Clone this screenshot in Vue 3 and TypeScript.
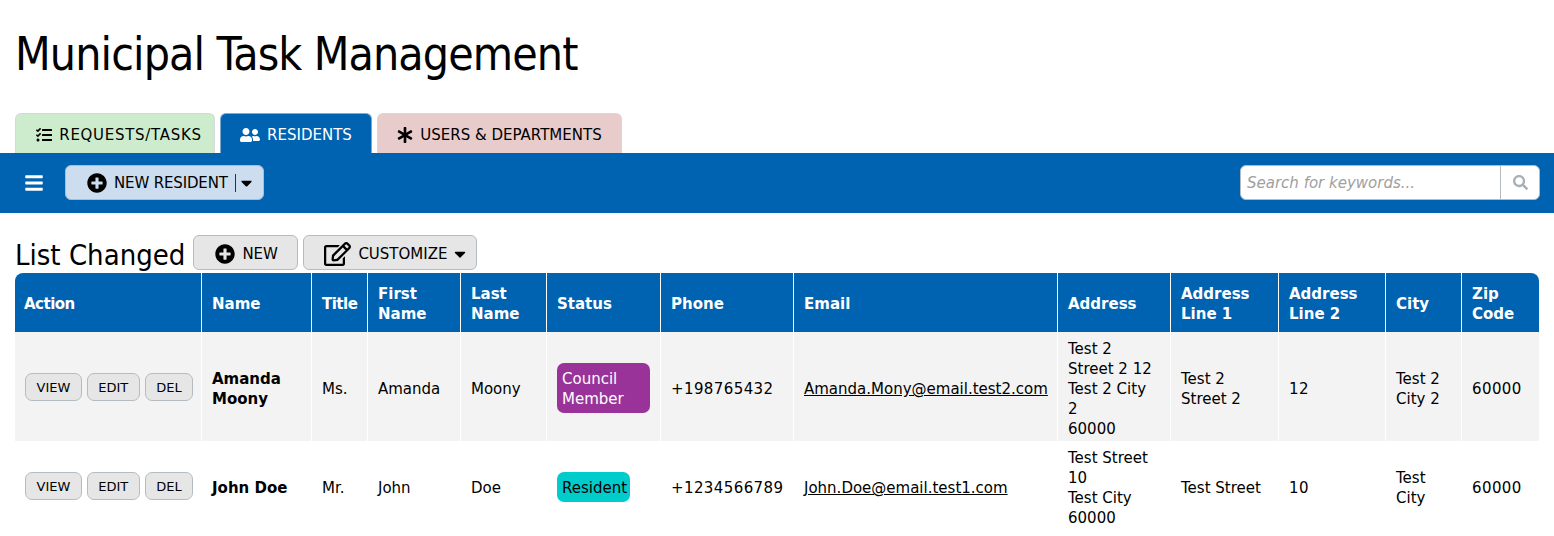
<script setup lang="ts">
interface Resident {
  name: string
  title: string
  first: string
  last: string
  status: string
  statusClass: string
  phone: string
  email: string
  address: string[]
  line1: string
  line2: string
  city: string
  zip: string
}

const columns = [
  'Action', 'Name', 'Title', 'First Name', 'Last Name', 'Status', 'Phone', 'Email',
  'Address', 'Address Line 1', 'Address Line 2', 'City', 'Zip Code',
]

const residents: Resident[] = [
  {
    name: 'Amanda Moony', title: 'Ms.', first: 'Amanda', last: 'Moony',
    status: 'Council Member', statusClass: 'council', phone: '+198765432',
    email: 'Amanda.Mony@email.test2.com',
    address: ['Test 2', 'Street 2 12', 'Test 2 City', '2', '60000'],
    line1: 'Test 2 Street 2', line2: '12', city: 'Test 2 City 2', zip: '60000',
  },
  {
    name: 'John Doe', title: 'Mr.', first: 'John', last: 'Doe',
    status: 'Resident', statusClass: 'resident', phone: '+1234566789',
    email: 'John.Doe@email.test1.com',
    address: ['Test Street', '10', 'Test City', '60000'],
    line1: 'Test Street', line2: '10', city: 'Test City', zip: '60000',
  },
]

const plusPath = 'M256 8C119 8 8 119 8 256s111 248 248 248 248-111 248-248S393 8 256 8zm144 276c0 6.6-5.4 12-12 12h-92v92c0 6.6-5.4 12-12 12h-56c-6.6 0-12-5.4-12-12v-92h-92c-6.6 0-12-5.4-12-12v-56c0-6.6 5.4-12 12-12h92v-92c0-6.6 5.4-12 12-12h56c6.6 0 12 5.4 12 12v92h92c6.6 0 12 5.4 12 12v56z'
const caretPath = 'M31.3 192h257.3c17.8 0 26.7 21.5 14.1 34.1L174.1 354.8c-7.8 7.8-20.5 7.8-28.3 0L17.2 226.1C4.6 213.5 13.5 192 31.3 192z'
</script>

<template>
  <div class="page">
    <h1>Municipal Task Management</h1>

    <div class="tabs">
      <a class="tab green">
        <svg class="tab-icon" width="16" height="16" viewBox="0 0 512 512"><path d="M139.61 35.5a12 12 0 0 0-17 0L58.93 98.81l-22.7-22.12a12 12 0 0 0-17 0L3.53 92.41a12 12 0 0 0 0 17l47.59 47.4a12.78 12.78 0 0 0 17.61 0l15.59-15.62L156.52 69a12.09 12.09 0 0 0 .09-17zm0 159.19a12 12 0 0 0-17 0l-63.68 63.72-22.7-22.1a12 12 0 0 0-17 0L3.53 252a12 12 0 0 0 0 17L51 316.5a12.77 12.77 0 0 0 17.6 0l15.7-15.69 72.2-72.22a12 12 0 0 0 .09-16.9zM64 368c-26.49 0-48.59 21.5-48.59 48S37.53 464 64 464a48 48 0 0 0 0-96zm432 16H208a16 16 0 0 0-16 16v32a16 16 0 0 0 16 16h288a16 16 0 0 0 16-16v-32a16 16 0 0 0-16-16zm0-320H208a16 16 0 0 0-16 16v32a16 16 0 0 0 16 16h288a16 16 0 0 0 16-16V80a16 16 0 0 0-16-16zm0 160H208a16 16 0 0 0-16 16v32a16 16 0 0 0 16 16h288a16 16 0 0 0 16-16v-32a16 16 0 0 0-16-16z" /></svg>
        REQUESTS/TASKS
      </a>
      <a class="tab active">
        <svg class="tab-icon" width="20" height="16" viewBox="0 0 640 512"><path d="M192 256c61.9 0 112-50.1 112-112S253.9 32 192 32 80 82.1 80 144s50.1 112 112 112zm76.8 32h-8.3c-20.8 10-43.9 16-68.5 16s-47.6-6-68.5-16h-8.3C51.6 288 0 339.6 0 403.2V432c0 26.5 21.5 48 48 48h288c26.5 0 48-21.5 48-48v-28.8c0-63.6-51.6-115.2-115.2-115.2zM480 256c53 0 96-43 96-96s-43-96-96-96-96 43-96 96 43 96 96 96zm48 32h-3.8c-13.9 4.8-28.6 8-44.2 8s-30.3-3.2-44.2-8H432c-20.4 0-39.2 5.9-55.7 15.4 24.4 26.3 39.7 61.2 39.7 99.8v38.4c0 2.2-.5 4.3-.6 6.4H592c26.5 0 48-21.5 48-48 0-61.9-50.1-112-112-112z" /></svg>
        RESIDENTS
      </a>
      <a class="tab red">
        <svg class="tab-icon" width="16" height="16" viewBox="0 0 512 512"><path d="M478.21 334.093L336 256l142.21-78.093c11.795-6.477 15.961-21.384 9.232-33.037l-19.48-33.741c-6.728-11.653-21.72-15.499-33.227-8.523L296 186.718l3.475-162.204C299.763 11.061 288.937 0 275.48 0h-38.96c-13.456 0-24.283 11.061-23.994 24.514L216 186.718 77.265 102.607c-11.506-6.976-26.499-3.13-33.227 8.523l-19.48 33.741c-6.728 11.653-2.562 26.56 9.233 33.037L176 256 33.79 334.093c-11.795 6.477-15.961 21.384-9.232 33.037l19.48 33.741c6.728 11.653 21.721 15.499 33.227 8.523L216 325.282l-3.475 162.204C212.237 500.939 223.064 512 236.52 512h38.961c13.456 0 24.283-11.061 23.995-24.514L296 325.282l138.735 84.111c11.506 6.976 26.499 3.13 33.227-8.523l19.48-33.741c6.728-11.653 2.563-26.559-9.232-33.036z" /></svg>
        USERS &amp; DEPARTMENTS
      </a>
    </div>

    <div class="toolbar">
      <svg class="menu" width="18" height="20" viewBox="0 0 448 512"><path fill="#fff" d="M16 132h416c8.837 0 16-7.163 16-16V76c0-8.837-7.163-16-16-16H16C7.163 60 0 67.163 0 76v40c0 8.837 7.163 16 16 16zm0 160h416c8.837 0 16-7.163 16-16v-40c0-8.837-7.163-16-16-16H16c-8.837 0-16 7.163-16 16v40c0 8.837 7.163 16 16 16zm0 160h416c8.837 0 16-7.163 16-16v-40c0-8.837-7.163-16-16-16H16c-8.837 0-16 7.163-16 16v40c0 8.837 7.163 16 16 16z" /></svg>
      <button class="btn new-resident">
        <svg width="20" height="20" viewBox="0 0 512 512"><path :d="plusPath" /></svg>
        <span class="label">NEW RESIDENT</span>
        <span class="split"></span>
        <svg width="11" height="18" viewBox="0 0 320 512"><path :d="caretPath" /></svg>
      </button>
      <div class="search">
        <input type="text" placeholder="Search for keywords..." />
        <span class="search-btn">
          <svg width="15" height="15" viewBox="0 0 512 512"><path fill="#a9b0b4" d="M505 442.7L405.3 343c-4.5-4.5-10.6-7-17-7H372c27.6-35.3 44-79.7 44-128C416 93.1 322.9 0 208 0S0 93.1 0 208s93.1 208 208 208c48.3 0 92.7-16.4 128-44v16.3c0 6.4 2.5 12.5 7 17l99.7 99.7c9.4 9.4 24.6 9.4 33.9 0l28.3-28.3c9.4-9.4 9.4-24.6.1-34zM208 336c-70.7 0-128-57.2-128-128 0-70.7 57.2-128 128-128 70.7 0 128 57.2 128 128 0 70.7-57.2 128-128 128z" /></svg>
        </span>
      </div>
    </div>

    <div class="list-head">
      <h2>List Changed</h2>
      <button class="btn grey new">
        <svg width="20" height="20" viewBox="0 0 512 512"><path :d="plusPath" /></svg>
        <span class="label">NEW</span>
      </button>
      <button class="btn grey customize">
        <svg width="27" height="24" viewBox="0 0 576 512"><path d="M402.3 344.9l32-32c5-5 13.7-1.5 13.7 5.7V464c0 26.5-21.5 48-48 48H48c-26.5 0-48-21.5-48-48V112c0-26.5 21.5-48 48-48h273.5c7.1 0 10.7 8.6 5.7 13.7l-32 32c-1.5 1.5-3.5 2.3-5.7 2.3H48v352h352V350.5c0-2.1.8-4.1 2.3-5.6zm156.6-201.8L296.3 405.7l-90.4 10c-26.2 2.9-48.5-19.2-45.6-45.6l10-90.4L432.9 17.1c22.9-22.9 59.9-22.9 82.7 0l43.2 43.2c22.9 22.9 22.9 60 .1 82.8zM460.1 174L402 115.9 216.2 301.8l-7.3 65.3 65.3-7.3L460.1 174zm64.8-79.7l-43.2-43.2c-4.1-4.1-10.8-4.1-14.8 0L436 82l58.1 58.1 30.9-30.9c4-4.2 4-10.8-.1-14.9z" /></svg>
        <span class="label">CUSTOMIZE</span>
        <svg width="12" height="18" viewBox="0 0 320 512"><path :d="caretPath" /></svg>
      </button>
    </div>

    <table>
      <thead>
        <tr>
          <th v-for="c in columns" :key="c">{{ c }}</th>
        </tr>
      </thead>
      <tbody>
        <tr v-for="r in residents" :key="r.email">
          <td class="actions">
            <button class="mini">VIEW</button>
            <button class="mini">EDIT</button>
            <button class="mini">DEL</button>
          </td>
          <td class="strong">{{ r.name }}</td>
          <td>{{ r.title }}</td>
          <td>{{ r.first }}</td>
          <td>{{ r.last }}</td>
          <td><span class="status" :class="r.statusClass">{{ r.status }}</span></td>
          <td class="num">{{ r.phone }}</td>
          <td><a class="mail">{{ r.email }}</a></td>
          <td><div v-for="a in r.address" :key="a">{{ a }}</div></td>
          <td>{{ r.line1 }}</td>
          <td class="num">{{ r.line2 }}</td>
          <td>{{ r.city }}</td>
          <td class="num">{{ r.zip }}</td>
        </tr>
      </tbody>
    </table>
  </div>
</template>

<style>
html, body {
  margin: 0;
  background: #fff;
  overflow: hidden;
}
</style>

<style scoped>
.page {
  font-family: "DejaVu Sans", Verdana, sans-serif;
  color: #000;
  height: 536px;
  overflow: hidden;
}

h1 {
  margin: 0;
  padding: 26px 15px 0;
  height: 113px;
  box-sizing: border-box;
  font-family: "DejaVu Sans Condensed", "DejaVu Sans", sans-serif;
  font-stretch: condensed;
  font-weight: 400;
  font-size: 46px;
  line-height: 56px;
  letter-spacing: -0.88px;
  white-space: nowrap;
}

.tabs {
  display: flex;
  padding-left: 15px;
  height: 40px;
}

.tab {
  display: flex;
  align-items: center;
  justify-content: center;
  gap: 7px;
  box-sizing: border-box;
  height: 40px;
  padding-top: 2px;
  border: 1px solid #d8d8d8;
  border-bottom: none;
  border-radius: 6px 6px 0 0;
  font-size: 15px;
}

.tab-icon {
  flex: none;
}

.green {
  width: 200px;
  margin-right: 5px;
  padding-left: 8px;
  background: #cdebcd;
  letter-spacing: 0.7px;
}

.active {
  width: 152px;
  margin-right: 5px;
  background: #0063b1;
  border-color: #7fa9cf;
  color: #fff;
}

.active path {
  fill: #fff;
}

.red {
  width: 245px;
  background: #e8cccc;
}

.toolbar {
  display: flex;
  align-items: center;
  box-sizing: border-box;
  height: 60px;
  padding: 0 14px 2px 25px;
  background: #0063b1;
}

.menu {
  margin: 2px 22px 0 0;
}

.btn {
  display: flex;
  align-items: center;
  box-sizing: border-box;
  height: 35px;
  padding-top: 3px;
  border: 1px solid #b4bcc2;
  border-radius: 6px;
  font-family: "DejaVu Sans", Verdana, sans-serif;
  font-size: 15px;
  color: #000;
  cursor: pointer;
}

.new-resident {
  width: 199px;
  padding-left: 21px;
  padding-right: 0;
  background: #cbddee;
}

.new-resident .label {
  letter-spacing: -0.15px;
}

.label {
  margin-left: 7px;
}

.split {
  width: 1px;
  height: 18px;
  margin: 0 5px 0 7px;
  background: #333;
}

.search {
  display: flex;
  box-sizing: border-box;
  width: 300px;
  height: 35px;
  margin-left: auto;
  background: #fff;
  border: 1px solid #b4bcc2;
  border-radius: 6px;
  overflow: hidden;
}

.search input {
  flex: 1;
  min-width: 0;
  border: none;
  outline: none;
  padding: 2px 6px 0;
  background: transparent;
  font-family: "DejaVu Sans", Verdana, sans-serif;
  font-size: 15px;
  font-style: italic;
}

.search input::placeholder {
  color: #a0a0a0;
  opacity: 1;
}

.search-btn {
  display: flex;
  align-items: center;
  justify-content: center;
  width: 38px;
  border-left: 1px solid #b4bcc2;
}

.list-head {
  display: flex;
  align-items: center;
  gap: 5px;
  height: 60px;
  padding: 22px 0 3px 15px;
  box-sizing: border-box;
}

h2 {
  margin: 0 3px 0 0;
  font-family: "DejaVu Sans Condensed", "DejaVu Sans", sans-serif;
  font-stretch: condensed;
  font-weight: 400;
  font-size: 29px;
  line-height: 38px;
  white-space: nowrap;
  position: relative;
  top: 2px;
}

.grey {
  background: #e6e6e6;
}

.new {
  width: 105px;
  padding-left: 21px;
}

.customize {
  width: 174px;
  padding-left: 20px;
}

.customize .label {
  margin: 0 7px 0 7px;
}

table {
  width: 1524px;
  margin-left: 15px;
  border-collapse: separate;
  border-spacing: 0;
  table-layout: fixed;
  font-size: 15px;
  line-height: 20px;
}

th {
  height: 59px;
  padding: 2px 8px 0 10px;
  box-sizing: border-box;
  background: #0063b1;
  color: #fff;
  text-align: left;
  font-weight: 700;
  border-left: 1px solid #fff;
  font-size: 15px;
}

th:first-child {
  border-left: none;
  border-top-left-radius: 8px;
  padding-left: 9px;
}

th:last-child {
  border-top-right-radius: 8px;
}

th:nth-child(1),
th:nth-child(3) {
  letter-spacing: -0.5px;
}

th:nth-child(1) { width: 186px; }
th:nth-child(2) { width: 110px; }
th:nth-child(3) { width: 56px; }
th:nth-child(4) { width: 93px; }
th:nth-child(5) { width: 86px; }
th:nth-child(6) { width: 114px; }
th:nth-child(7) { width: 133px; }
th:nth-child(8) { width: 264px; }
th:nth-child(9) { width: 113px; }
th:nth-child(10) { width: 108px; }
th:nth-child(11) { width: 107px; }
th:nth-child(12) { width: 76px; }
th:nth-child(13) { width: 78px; }

td {
  padding: 7px 10px 2px;
  box-sizing: border-box;
  border-left: 1px solid #fff;
  vertical-align: middle;
}

td:first-child {
  border-left: none;
}

tbody tr:nth-child(odd) td {
  background: #f3f3f3;
}

.actions {
  padding: 0 0 0 10px;
  white-space: nowrap;
}

.mini {
  box-sizing: border-box;
  height: 28px;
  padding: 2px 10.5px 0;
  margin-right: 5px;
  border: 1px solid #b4bcc2;
  border-radius: 7px;
  background: #e6e6e6;
  font-family: "DejaVu Sans", Verdana, sans-serif;
  font-size: 13px;
  color: #000;
  vertical-align: middle;
}

.num {
  letter-spacing: 0.4px;
}

.strong {
  font-weight: 700;
}

.status {
  display: inline-block;
  margin-top: -2px;
  padding: 6px 3px 4px 5px;
  border-radius: 7px;
}

.council {
  background: #993399;
  color: #fff;
}

.resident {
  background: #00cccc;
  color: #000;
}

.mail {
  color: #000;
  text-decoration: underline;
  white-space: nowrap;
}
</style>
